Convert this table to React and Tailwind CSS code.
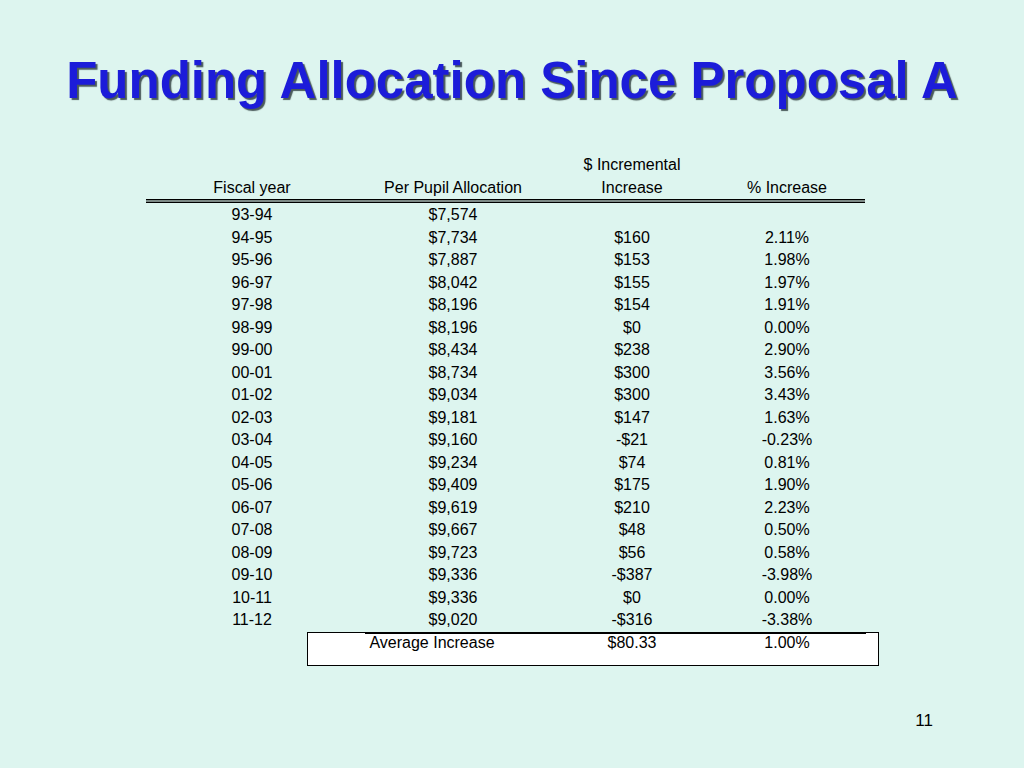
import React from 'react';

const rows = [
    ['93-94', '$7,574', '', ''],
    ['94-95', '$7,734', '$160', '2.11%'],
    ['95-96', '$7,887', '$153', '1.98%'],
    ['96-97', '$8,042', '$155', '1.97%'],
    ['97-98', '$8,196', '$154', '1.91%'],
    ['98-99', '$8,196', '$0', '0.00%'],
    ['99-00', '$8,434', '$238', '2.90%'],
    ['00-01', '$8,734', '$300', '3.56%'],
    ['01-02', '$9,034', '$300', '3.43%'],
    ['02-03', '$9,181', '$147', '1.63%'],
    ['03-04', '$9,160', '-$21', '-0.23%'],
    ['04-05', '$9,234', '$74', '0.81%'],
    ['05-06', '$9,409', '$175', '1.90%'],
    ['06-07', '$9,619', '$210', '2.23%'],
    ['07-08', '$9,667', '$48', '0.50%'],
    ['08-09', '$9,723', '$56', '0.58%'],
    ['09-10', '$9,336', '-$387', '-3.98%'],
    ['10-11', '$9,336', '$0', '0.00%'],
    ['11-12', '$9,020', '-$316', '-3.38%'],
];

const cols = 'grid grid-cols-[212px_190px_168px_142px]';

const Row = ({ cells }) => (
    <div className={`${cols} h-[22.5px] items-center text-center`}>
        {cells.map((c, i) => (
            <div key={i}>{c}</div>
        ))}
    </div>
);

export default function App() {
    return (
        <div
            className="relative w-[1024px] h-[768px] bg-[#ddf5ef] text-black overflow-hidden"
            style={{ fontFamily: '"Liberation Sans", Arial, sans-serif' }}
        >
            <h1 className="pt-[51px] text-center text-[51px] leading-[60px] font-bold text-[#1c1cd9] [text-shadow:2px_2px_1px_#4a5a5a]">
                Funding Allocation Since Proposal A
            </h1>

            <div className="mt-[42px] ml-[146px] w-[719px] text-[16px] leading-none">
                <div className={`${cols} h-[24px] items-center text-center`}>
                    <div />
                    <div />
                    <div>$ Incremental</div>
                    <div />
                </div>
                <div className={`${cols} h-[22px] items-center text-center`}>
                    <div>Fiscal year</div>
                    <div>Per Pupil Allocation</div>
                    <div>Increase</div>
                    <div>% Increase</div>
                </div>
                <div className="h-[4px] border-y border-black bg-[#7d8a86]" />
                <div className="pt-px">
                    {rows.map((r) => (
                        <Row key={r[0]} cells={r} />
                    ))}
                </div>
                <div className="ml-[161px] w-[572px] h-[34px] bg-white border border-black relative">
                    <div className="absolute -top-px left-[57px] w-[501px] h-[2px] bg-black" />
                    <div className="grid grid-cols-[29px_190px_210px_100px] pt-[2px] text-center">
                        <div />
                        <div>Average Increase</div>
                        <div>$80.33</div>
                        <div>1.00%</div>
                    </div>
                </div>
            </div>

            <div className="absolute right-[91px] top-[708px] text-[17px]">11</div>
        </div>
    );
}
